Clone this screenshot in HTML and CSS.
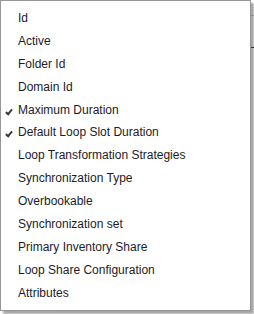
FILE: index.html
```html
<!DOCTYPE html>
<html lang="en">

<head>
    <meta charset="UTF-8">
    <meta name="viewport" content="width=device-width, initial-scale=1.0">
    <title>Columns</title>
    <link rel="stylesheet" href="styles.css">
</head>

<body>
    <div class="grid">
        <div class="grid_head"></div>
        <div class="grid_row"></div>
    </div>
    <ul class="menu">
        <li>Id</li>
        <li>Active</li>
        <li>Folder Id</li>
        <li>Domain Id</li>
        <li class="checked">Maximum Duration</li>
        <li class="checked">Default Loop Slot Duration</li>
        <li>Loop Transformation Strategies</li>
        <li>Synchronization Type</li>
        <li>Overbookable</li>
        <li>Synchronization set</li>
        <li>Primary Inventory Share</li>
        <li>Loop Share Configuration</li>
        <li>Attributes</li>
    </ul>
</body>

</html>
```

FILE: styles.css
```css
* {
    margin: 0px;
    padding: 0px;
    box-sizing: border-box;
}

body {
    background-color: white;
    width: 254px;
    height: 314px;
    overflow: hidden;
    position: relative;
    font-family: "Liberation Sans", Arial, sans-serif;
}

.grid_head {
    height: 16px;
    border-bottom: 1px solid #c8c8c8;
}

.grid_row {
    height: 32px;
    border-bottom: 1px solid #2c4f8a;
}

.menu {
    position: absolute;
    left: 0px;
    top: 0px;
    width: 251px;
    height: 311px;
    list-style: none;
    background-color: white;
    border: 1px solid #979797;
    padding: 6px 0px 5px 0px;
    box-shadow: 3px 3px 2px rgba(0, 0, 0, 0.35);
}

.menu li {
    height: 22.9px;
    line-height: 22px;
    padding-left: 17px;
    font-size: 12px;
    color: #1b1b2a;
    position: relative;
    white-space: nowrap;
}

.menu li.checked::before {
    content: "";
    position: absolute;
    left: 6px;
    top: 9px;
    width: 2px;
    height: 5px;
    border-right: 2px solid #3a3a3a;
    border-bottom: 2px solid #3a3a3a;
    transform: rotate(40deg);
}
```
